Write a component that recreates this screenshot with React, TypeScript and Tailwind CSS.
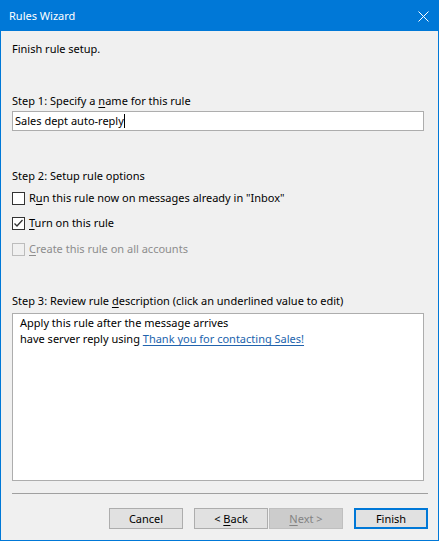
import React from 'react';

const font = { fontFamily: '"Segoe UI", "Noto Sans", sans-serif' };

const Key = ({ children }: { children: React.ReactNode }) => (
  <span className="underline underline-offset-2">{children}</span>
);

const CheckRow = ({
  checked,
  disabled,
  children,
}: {
  checked?: boolean;
  disabled?: boolean;
  children: React.ReactNode;
}) => (
  <div className="flex items-center h-[16px]">
    <div
      className={
        disabled
          ? 'w-[13px] h-[13px] border border-[#bcbcbc] bg-[#f0f0f0] flex items-center justify-center'
          : 'w-[13px] h-[13px] border border-[#333333] bg-white flex items-center justify-center'
      }
    >
      {checked && (
        <svg width="11" height="11" viewBox="0 0 11 11">
          <path d="M1.5 5.5 L4 8 L9.5 2" fill="none" stroke="#333333" strokeWidth="1.3" />
        </svg>
      )}
    </div>
    <span className={disabled ? 'ml-[4px] text-[#8d8d8d]' : 'ml-[4px] text-black'}>{children}</span>
  </div>
);

const Btn = ({
  children,
  variant = 'normal',
}: {
  children: React.ReactNode;
  variant?: 'normal' | 'disabled' | 'default';
}) => {
  const cls =
    variant === 'disabled'
      ? 'bg-[#cccccc] border border-[#bfbfbf] text-[#838383]'
      : variant === 'default'
      ? 'bg-[#e1e1e1] border-2 border-[#0078d7] text-black'
      : 'bg-[#e1e1e1] border border-[#adadad] text-black';
  return (
    <div className={`w-[74px] h-[21px] flex items-center justify-center ${cls}`}>
      <span className="leading-[16px]">{children}</span>
    </div>
  );
};

export default function App() {
  return (
    <div
      style={font}
      className="w-[439px] h-[541px] flex flex-col border border-[#0078d7] bg-[#f0f0f0] text-[11px] leading-[16px] text-black"
    >
      {/* title bar */}
      <div className="h-[30px] bg-[#0078d7] flex items-center justify-between pl-[8px] pr-[9px] shrink-0">
        <span className="text-white text-[11px]">Rules Wizard</span>
        <svg width="11" height="11" viewBox="0 0 11 11">
          <path d="M0.5 0.5 L10.5 10.5 M10.5 0.5 L0.5 10.5" stroke="white" strokeWidth="1" />
        </svg>
      </div>

      <div className="flex flex-col pl-[11px] pr-[10px] flex-1">
        <div className="mt-[10px]">Finish rule setup.</div>

        <div className="mt-[36px]">
          Step 1: Specify a <Key>n</Key>ame for this rule
        </div>
        <div className="mt-[2px] w-[412px] h-[20px] bg-white border border-[#adadad] flex items-center pl-[2px]">
          <span>Sales dept auto-reply</span>
          <span className="w-px h-[14px] bg-black" />
        </div>

        <div className="mt-[37px]">Step 2: Setup rule options</div>
        <div className="mt-[6px] flex flex-col gap-[9px]">
          <CheckRow>
            R<Key>u</Key>n this rule now on messages already in "Inbox"
          </CheckRow>
          <CheckRow checked>
            <Key>T</Key>urn on this rule
          </CheckRow>
          <div className="mt-[1px]">
            <CheckRow disabled>
              <Key>C</Key>reate this rule on all accounts
            </CheckRow>
          </div>
        </div>

        <div className="mt-[36px]">
          Step 3: Review rule <Key>d</Key>escription (click an underlined value to edit)
        </div>
        <div className="mt-[4px] w-[412px] h-[168px] bg-white border border-[#adadad] pl-[7px] pt-[1px]">
          <div>Apply this rule after the message arrives</div>
          <div>
            have server reply using{' '}
            <span className="text-[#2163ad] underline underline-offset-2 [text-decoration-skip-ink:none]">
              Thank you for contacting Sales!
            </span>
          </div>
        </div>

        <div className="mt-[12px] h-px w-[416px] bg-[#a0a0a0]" />

        <div className="mt-[14px] flex justify-end w-[416px]">
          <Btn>Cancel</Btn>
          <div className="ml-[11px]">
            <Btn>
              &lt; <Key>B</Key>ack
            </Btn>
          </div>
          <div className="ml-[1px]">
            <Btn variant="disabled">
              <Key>N</Key>ext &gt;
            </Btn>
          </div>
          <div className="ml-[11px]">
            <Btn variant="default">Finish</Btn>
          </div>
        </div>
      </div>
    </div>
  );
}
